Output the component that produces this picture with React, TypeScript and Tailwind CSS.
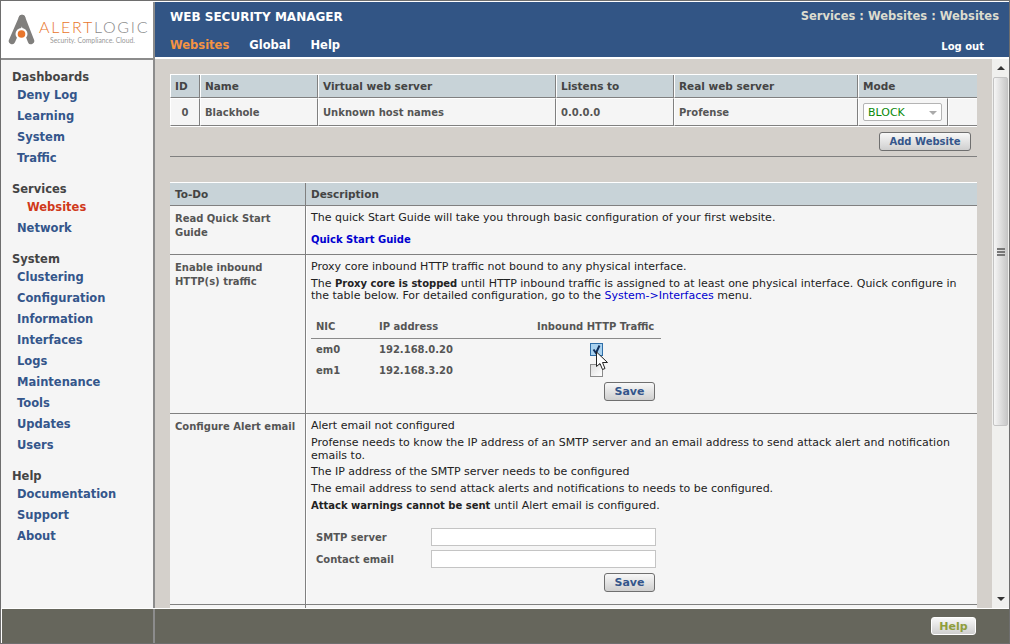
const font = { fontFamily: '"DejaVu Sans", Verdana, sans-serif' };

const groups = [
  { title: "Dashboards", links: ["Deny Log", "Learning", "System", "Traffic"] },
  { title: "Services", links: ["Websites", "Network"] },
  {
    title: "System",
    links: ["Clustering", "Configuration", "Information", "Interfaces", "Logs", "Maintenance", "Tools", "Updates", "Users"],
  },
  { title: "Help", links: ["Documentation", "Support", "About"] },
];

function Logo() {
  return (
    <div className="h-[56px] bg-white flex items-center pl-[6px] gap-[4px] shrink-0">
      <svg width="28" height="32" viewBox="0 0 28 32" className="shrink-0">
        <path d="M15 4 L5 27" stroke="#807f7d" strokeWidth="6.500" strokeLinecap="round" />
        <path d="M15 4 L24 27" stroke="#807f7d" strokeWidth="6.500" strokeLinecap="round" />
        <circle cx="14.500" cy="20" r="6" fill="#fff" />
        <circle cx="14.500" cy="20" r="3.800" fill="#e8762c" />
      </svg>
      <div className="flex flex-col items-start pt-[3px]" style={{ fontFamily: '"Lato", sans-serif' }}>
        <div className="text-[16px] leading-[16px] tracking-[1.7px] font-light whitespace-nowrap">
          <span className="text-[#e8762c]">ALERT</span>
          <span className="text-[#8a8a8a]">LOGIC</span>
        </div>
        <div className="text-[6.8px] leading-[10px] text-[#999] whitespace-nowrap pl-[11px]">Security. Compliance. Cloud.</div>
      </div>
    </div>
  );
}

function Sidebar() {
  return (
    <div className="w-[154px] shrink-0 flex flex-col border-r-2 border-[#8c8c8c]">
      <Logo />
      <div className="h-[2px] bg-[#8c8c8c] shrink-0" />
      <nav className="flex-1 bg-[#f5f5f5] pt-[10px] pl-[11px] overflow-hidden">
        {groups.map((g) => (
          <div key={g.title} className="mb-[13px]">
            <div className="text-[11.5px] font-bold text-[#444] leading-[15px]">{g.title}</div>
            {g.links.map((l) => (
              <div
                key={l}
                className={
                  l === "Websites"
                    ? "text-[11.5px] font-bold text-[#d0391a] leading-[21px] pl-[15px] h-[21px]"
                    : "text-[11.5px] font-bold text-[#34568b] leading-[21px] pl-[5px] h-[21px]"
                }
              >
                {l}
              </div>
            ))}
          </div>
        ))}
      </nav>
    </div>
  );
}

function Header() {
  return (
    <header className="h-[55px] bg-[#325585] flex flex-col px-[15px] shrink-0">
      <div className="flex justify-between items-center h-[29px]">
        <span className="text-[12px] font-bold text-white">WEB SECURITY MANAGER</span>
        <span className="text-[11.5px] font-bold text-[#dcdccf] -mr-[5px]">Services : Websites : Websites</span>
      </div>
      <div className="flex items-center h-[26px] pt-[4px] gap-[20px]">
        <span className="text-[11.5px] font-bold text-[#f59342]">Websites</span>
        <span className="text-[11.5px] font-bold text-white">Global</span>
        <span className="text-[11.5px] font-bold text-white">Help</span>
        <span className="ml-auto text-[10px] font-bold text-white mr-[10px]">Log out</span>
      </div>
    </header>
  );
}

function Button({ children, className = "" }: { children: React.ReactNode; className?: string }) {
  return (
    <button
      className={
        "h-[19px] rounded-[3px] border border-[#6f6f6f] bg-gradient-to-b from-[#f8f8f8] to-[#cfcfcf] font-bold text-[#34568b] leading-[16px] " +
        className
      }
    >
      {children}
    </button>
  );
}

function WebsitesTable() {
  const headCell = "bg-[#c8d3d8] border-b border-r border-l border-b-[#808080] border-r-[#808080] border-l-white h-[23px] px-[4px] pt-[1px] text-left text-[10.5px] font-bold text-[#444]";
  const bodyCell = "bg-[#f5f5f5] border-t border-b border-r border-l border-t-white border-b-[#808080] border-r-[#808080] border-l-white h-[28px] px-[4px] text-[10px] font-bold text-[#555]";
  return (
    <div className="border-t border-white">
      <table className="w-full table-fixed border-separate border-spacing-0">
        <colgroup>
          <col className="w-[30px]" />
          <col className="w-[118px]" />
          <col className="w-[238px]" />
          <col className="w-[118px]" />
          <col className="w-[184px]" />
          <col className="w-[90px]" />
          <col className="w-[29px]" />
        </colgroup>
        <thead>
          <tr>
            <th className={headCell}>ID</th>
            <th className={headCell}>Name</th>
            <th className={headCell}>Virtual web server</th>
            <th className={headCell}>Listens to</th>
            <th className={headCell}>Real web server</th>
            <th className={headCell + " border-r-0"} colSpan={2}>Mode</th>
          </tr>
        </thead>
        <tbody>
          <tr>
            <td className={bodyCell + " text-center"}>0</td>
            <td className={bodyCell}>Blackhole</td>
            <td className={bodyCell}>Unknown host names</td>
            <td className={bodyCell}>0.0.0.0</td>
            <td className={bodyCell}>Profense</td>
            <td className={bodyCell}>
              <div className="h-[18px] w-[79px] border border-[#b4b4b4] rounded-[2px] bg-white flex items-center justify-between pl-[4px] pr-[4px] pt-[2px] text-[11px] font-normal text-[#0a8a0a]">
                BLOCK
                <span className="w-0 h-0 border-l-[4px] border-r-[4px] border-t-[4px] border-l-transparent border-r-transparent border-t-[#aaa]" />
              </div>
            </td>
            <td className={bodyCell + " border-r-0"} />
          </tr>
        </tbody>
      </table>
      <div className="h-[31px] border-t border-white border-b border-b-[#808080] flex items-center justify-end pr-[6px]">
        <Button className="w-[92px] text-[10px]">Add Website</Button>
      </div>
    </div>
  );
}

function NicTable() {
  return (
    <div className="w-[350px] mt-[9px] text-[10px] font-bold text-[#555] relative">
      <div className="flex h-[28px] items-center border-b border-[#8a8a8a] pl-[5px] pt-[3px]">
        <span className="w-[63px]">NIC</span>
        <span className="w-[158px]">IP address</span>
        <span className="whitespace-nowrap">Inbound HTTP Traffic</span>
      </div>
      <div className="flex h-[21px] items-center pl-[5px]">
        <span className="w-[63px]">em0</span>
        <span className="w-[211px]">192.168.0.20</span>
        <span className="w-[13px] h-[13px] border border-[#2f6ea8] bg-[#a9d2f0] flex items-center justify-center">
          <svg width="11" height="11" viewBox="0 0 11 11">
            <path d="M2.500 5.500 L5 9 L8.500 1.500" fill="none" stroke="#12305c" strokeWidth="2" />
          </svg>
        </span>
      </div>
      <div className="flex h-[20px] items-center pl-[5px]">
        <span className="w-[63px]">em1</span>
        <span className="w-[211px]">192.168.3.20</span>
        <span className="w-[13px] h-[13px] border border-[#8a8a8a] bg-gradient-to-br from-[#ddd] to-white" />
      </div>
      {/* mouse pointer */}
      <svg width="14" height="21" viewBox="0 0 14 21" className="absolute left-[284px] top-[40px]">
        <path
          d="M1.500 1 L1.500 15.500 L5 12.500 L7.500 18.500 L10 17.500 L7.500 11.500 L12.500 11.500 Z"
          fill="#fff"
          stroke="#222"
          strokeWidth="1"
        />
      </svg>
      <div className="flex justify-end mt-[2px] pr-[6px]">
        <Button className="w-[51px] text-[11px]">Save</Button>
      </div>
    </div>
  );
}

function TodoRow({ label, h, children }: { label: string; h: string; children: React.ReactNode }) {
  return (
    <div className={"flex border-b border-[#808080] bg-[#f5f5f5] " + h}>
      <div className="w-[136px] shrink-0 border-r border-[#808080] pl-[5px] pr-[2px] pt-[6px] text-[10px] font-bold leading-[14px] text-[#555]">
        {label}
      </div>
      <div className="flex-1 border-l border-white pl-[4px] pr-[6px] pt-[5px] text-[11px] leading-[13px] text-[#222]">{children}</div>
    </div>
  );
}

function TodoTable() {
  return (
    <div className="border-t border-white mt-[25px]">
      <div className="flex h-[23px] bg-[#c8d3d8] border-b border-[#808080] text-[10.5px] font-bold text-[#444] items-center">
        <div className="w-[136px] shrink-0 h-full flex items-center border-r border-[#808080] pl-[5px] pt-[1px]">To-Do</div>
        <div className="pl-[5px] pt-[1px]">Description</div>
      </div>
      <TodoRow label="Read Quick Start Guide" h="h-[49px]">
        <p>The quick Start Guide will take you through basic configuration of your first website.</p>
        <p className="mt-[9px] text-[10px] font-bold text-[#0000d0]">Quick Start Guide</p>
      </TodoRow>
      <TodoRow label="Enable inbound HTTP(s) traffic" h="h-[159px]">
        <p>Proxy core inbound HTTP traffic not bound to any physical interface.</p>
        <p className="mt-[5px] leading-[12px]">
          The <b className="text-[10px]">Proxy core is stopped</b> until HTTP inbound traffic is assigned to at least one physical interface. Quick configure in the table below. For detailed configuration, go to the{" "}
          <span className="text-[#0000d0]">System-&gt;Interfaces</span> menu.
        </p>
        <NicTable />
      </TodoRow>
      <TodoRow label="Configure Alert email" h="h-[191px]">
        <p>Alert email not configured</p>
        <p className="mt-[4px]">Profense needs to know the IP address of an SMTP server and an email address to send attack alert and notification emails to.</p>
        <p className="mt-[3px]">The IP address of the SMTP server needs to be configured</p>
        <p className="mt-[4px]">The email address to send attack alerts and notifications to needs to be configured.</p>
        <p className="mt-[4px]"><b className="text-[10px]">Attack warnings cannot be sent</b> until Alert email is configured.</p>
        <div className="w-[350px] mt-[14px] text-[10px] font-bold text-[#555]">
          <div className="flex items-center h-[22px] pl-[5px]">
            <span className="w-[115px]">SMTP server</span>
            <span className="w-[225px] h-[18px] border border-[#c4c4c4] bg-white" />
          </div>
          <div className="flex items-center h-[22px] pl-[5px]">
            <span className="w-[115px]">Contact email</span>
            <span className="w-[225px] h-[18px] border border-[#c4c4c4] bg-white" />
          </div>
          <div className="flex justify-end mt-[3px] pr-[6px]">
            <Button className="w-[51px] text-[11px]">Save</Button>
          </div>
        </div>
      </TodoRow>
      <div className="flex h-[10px] bg-[#f5f5f5]">
        <div className="w-[136px] border-r border-[#808080]" />
      </div>
    </div>
  );
}

function Scrollbar() {
  return (
    <div className="w-[17px] shrink-0 bg-[#f0f0ee] flex flex-col items-center">
      <div className="h-[18px] flex items-center justify-center shrink-0">
        <span className="w-0 h-0 border-l-[4px] border-r-[4px] border-b-[4px] border-l-transparent border-r-transparent border-b-[#333]" />
      </div>
      <div className="w-[15px] h-[349px] rounded-[2px] border border-[#c4c4c4] bg-gradient-to-r from-[#f6f6f6] to-[#c8c8c8] flex flex-col items-center justify-center gap-[1px] shrink-0">
        <span className="w-[8px] h-[2px] bg-[#777]" />
        <span className="w-[8px] h-[2px] bg-[#777]" />
        <span className="w-[8px] h-[2px] bg-[#777]" />
      </div>
      <div className="flex-1" />
      <div className="h-[18px] flex items-center justify-center shrink-0">
        <span className="w-0 h-0 border-l-[4px] border-r-[4px] border-t-[4px] border-l-transparent border-r-transparent border-t-[#333]" />
      </div>
    </div>
  );
}

export default function App() {
  return (
    <div className="w-[1010px] h-[644px] bg-[#6e6e6e] pt-[1px] overflow-hidden flex flex-col" style={font}>
      <div className="h-[1px] bg-white shrink-0 ml-[1px] mr-[1px]" />
      <div className="flex flex-1 min-h-0 ml-[1px] mr-[1px]">
        <Sidebar />
        <div className="flex-1 flex flex-col min-w-0">
          <Header />
          <div className="h-[2px] bg-white shrink-0" />
          <div className="flex-1 flex min-h-0">
            <main className="flex-1 bg-[#d4d0cb] px-[15px] pt-[15px] overflow-hidden">
              <WebsitesTable />
              <TodoTable />
            </main>
            <Scrollbar />
          </div>
        </div>
      </div>
      <div className="h-[1px] bg-white shrink-0 ml-[1px] mr-[1px]" />
      <footer className="h-[34px] shrink-0 flex ml-[1px] mr-[1px] mb-[1px] border-l border-white">
        <div className="w-[151px] bg-[#66665c] border-r-2 border-[#8c8c8c] box-content" />
        <div className="flex-1 bg-[#66665c] flex items-center justify-end pr-[33px]">
          <button className="w-[45px] h-[18px] rounded-[3px] border border-white bg-gradient-to-b from-[#f8f8f8] to-[#cfcfcf] text-[11px] font-bold text-[#8f9e3c] leading-[15px]">
            Help
          </button>
        </div>
      </footer>
    </div>
  );
}
